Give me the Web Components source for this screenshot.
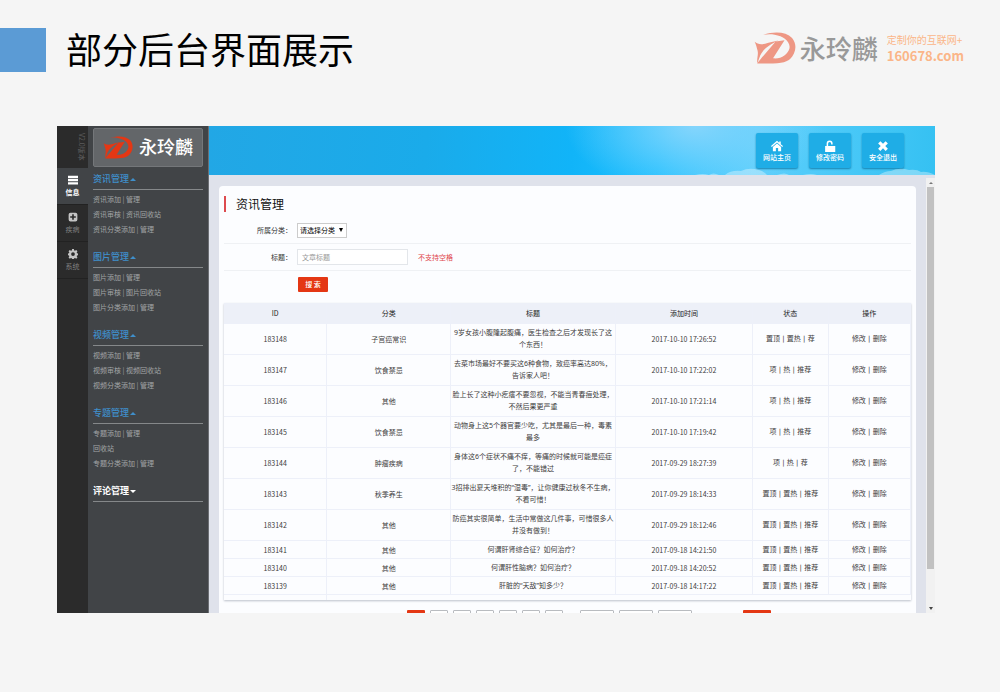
<!DOCTYPE html>
<html lang="zh-CN">
<head>
<meta charset="utf-8">
<title>部分后台界面展示</title>
<style>
html{background:#f5f5f5}
body{margin:0;font-family:"Noto Sans CJK SC","Noto Sans",sans-serif;color:#000}
</style>
</head>
<body>
<slide-page></slide-page>
<script>
const define = (name, html, setup) => {
  const tpl = document.createElement('template');
  tpl.innerHTML = html;
  customElements.define(name, class extends HTMLElement {
    constructor() {
      super();
      this.attachShadow({mode: 'open'}).append(tpl.content.cloneNode(true));
    }
    connectedCallback() {
      if (setup && !this.ready) { this.ready = true; setup(this, this.shadowRoot); }
    }
  });
};

const ICONS = {
  bars: '<path d="M0 1h16v4H0zM0 6.500h16v3.500H0zM0 11.500h16v3.500H0z"/>',
  plus: '<path fill-rule="evenodd" d="M4 1h8a3 3 0 0 1 3 3v8a3 3 0 0 1-3 3H4a3 3 0 0 1-3-3V4a3 3 0 0 1 3-3zM6.700 3.500v3.200H3.500v2.600h3.200v3.200h2.600V9.300h3.200V6.700H9.300V3.500z"/>',
  gear: '<path fill-rule="evenodd" d="M6.600 0h2.800l.5 2.200 1.300.6 2-1.300 1.900 1.900-1.200 2 .5 1.300 2.300.5v2.600l-2.300.5-.5 1.300 1.200 2-1.900 1.900-2-1.300-1.300.6-.5 2.200H6.600l-.5-2.200-1.300-.6-2 1.300-1.900-1.900 1.200-2-.5-1.300-2.300-.5V7.200l2.300-.5.5-1.300-1.200-2 1.900-1.900 2 1.300 1.300-.6zM8 5a3 3 0 1 0 0 6 3 3 0 0 0 0-6z"/>',
  home: '<path d="M8 1l3 2.700V2h2v3.500L16 8l-1 1.200L8 3.200 1 9.200 0 8zM8 4.500l5.500 4.700V15H9.500v-4.500h-3V15h-4V9.200z"/>',
  unlock: '<path d="M3.500 8V4.500a4 4 0 0 1 8 0V6H9.500V4.500a2 2 0 0 0-4 0V8H15v8H1.500V8z"/>',
  close: '<path d="M4.500 1.500L8 5l3.500-3.500 3 3L11 8l3.500 3.500-3 3L8 11l-3.500 3.500-3-3L5 8 1.500 4.500z"/>'
};

define('ui-icon', `<style>
:host{display:block;width:12px;height:12px}
svg{display:block;width:100%;height:100%;fill:currentColor}
</style><svg viewBox="0 0 16 16"></svg>`, (el, root) => {
  root.querySelector('svg').innerHTML = ICONS[el.getAttribute('name')];
});

define('brand-mark', `<style>
:host{display:block;width:42px}
svg{display:block;width:100%;fill:currentColor}
</style><svg viewBox="12 8 128 97">
<path d="M40 17C75 5 110 8 128 26C146 48 138 75 122 90C108 103 85 104 22 104C25 98 32 92 36 86L78 37L105 33L70 88C95 91 115 76 120 58C124 38 102 20 75 16C60 14 50 15 40 17Z"/>
<path d="M14 38C25 48 40 46 56 41L86 34C60 46 36 62 29 85L22 104C20 90 26 76 23 65C20 55 18 45 14 38Z"/></svg>`);

define('slide-header', `<style>
:host{display:flex;align-items:center;gap:20px;padding:20px 34px 0 0;height:60px}
i{width:46px;height:44px;background:#5b9bd5}
h1{margin:0;padding-bottom:4px;font-size:36px;line-height:48px;font-weight:400;white-space:nowrap}
.brand{display:flex;align-items:center;gap:4px;margin:0 2px 4px auto;color:#ee9784}
.name{font-size:26px;line-height:32px;font-weight:500;color:#999}
.tag{margin-left:5px;font-size:10px;line-height:16px;color:#fbb588}
.tag b{display:block;font-size:13px}
</style><i></i><h1>部分后台界面展示</h1>
<div class="brand"><brand-mark></brand-mark><span class="name">永玲麟</span><span class="tag">定制你的互联网+<b>160678.com</b></span></div>`);

define('rail-item', `<style>
:host{display:block;border-bottom:1px solid #222}
a{display:flex;flex-direction:column;align-items:center;justify-content:center;gap:2px;height:36px;color:#808080;text-decoration:none;font-size:7px;line-height:10px}
ui-icon{width:10px;height:10px;color:#c4c4c4}
:host([active]) a{background:#414447;color:#fff;font-weight:700}
:host([active]) ui-icon{color:#fff}
</style><a href="#"><ui-icon></ui-icon><slot></slot></a>`, (el, root) => {
  const old = root.querySelector('ui-icon');
  const icon = document.createElement('ui-icon');
  icon.setAttribute('name', el.getAttribute('icon'));
  old.replaceWith(icon);
});

define('nav-rail', `<style>
:host{display:block;width:31px;background:#2b2b2b}
.ver{display:flex;justify-content:flex-end;height:35px;padding:7px 1px 0 0;color:#5c5c5c;font-size:7px;line-height:10px}
.ver span{writing-mode:vertical-rl;text-orientation:sideways}
</style><div class="ver"><span>V2.0版本</span></div>
<rail-item icon="bars" active>信息</rail-item><rail-item icon="plus">疾病</rail-item><rail-item icon="gear">系统</rail-item>`);

define('nav-group', `<style>
:host{display:block;margin-bottom:10px}
h2{display:flex;align-items:center;gap:1px;margin:0;height:20px;border-bottom:1px solid #85888a;color:#3f8fcb;font-size:9px;line-height:20px;font-weight:500}
h2::after{content:"";border:3px solid transparent;border-top:0;border-bottom:3px solid currentColor}
:host([closed]) h2{color:#fff;font-weight:700}
:host([closed]) h2::after{border-top:3px solid currentColor;border-bottom:0}
div{padding-top:2px;color:#a2a4a6;font-size:7px;line-height:15px;white-space:nowrap}
p{margin:0}
a{color:inherit;text-decoration:none}
</style><h2></h2><div></div>`, (el, root) => {
  root.querySelector('h2').textContent = el.getAttribute('label');
  root.querySelector('div').innerHTML = (el.getAttribute('items') || '').split(';').map(line =>
    '<p>' + line.split('|').map(t => `<a href="#">${t}</a>`).join(' | ') + '</p>').join('');
});

define('side-menu', `<style>
:host{display:block;width:110px;padding:2px 5px 0;background:#414447;border-right:1px solid #6b6e73}
.logo{display:flex;align-items:center;justify-content:center;gap:6px;height:37px;margin-bottom:2px;border:1px solid #74777a;border-radius:2px;background:#636669;color:#e43714}
.logo brand-mark{width:30px}
.logo span{padding-bottom:3px;color:#fff;font-size:18px;line-height:24px;font-weight:500}
</style><div class="logo"><brand-mark></brand-mark><span>永玲麟</span></div>
<nav>
<nav-group label="资讯管理" items="资讯添加|管理;资讯审核|资讯回收站;资讯分类添加|管理"></nav-group>
<nav-group label="图片管理" items="图片添加|管理;图片审核|图片回收站;图片分类添加|管理"></nav-group>
<nav-group label="视频管理" items="视频添加|管理;视频审核|视频回收站;视频分类添加|管理"></nav-group>
<nav-group label="专题管理" items="专题添加|管理;回收站;专题分类添加|管理"></nav-group>
<nav-group label="评论管理" closed></nav-group>
</nav>`);

define('top-button', `<style>
:host{display:block}
button{display:flex;flex-direction:column;align-items:center;justify-content:center;gap:0;width:42px;height:35px;padding:0;border:0;border-radius:2px;background:#1fade6;box-shadow:0 1px 2px #1682b0;color:#fff;font:500 7px/10px "Noto Sans CJK SC",sans-serif}
</style><button type="button"><ui-icon></ui-icon><slot></slot></button>`, (el, root) => {
  const icon = document.createElement('ui-icon');
  icon.setAttribute('name', el.getAttribute('icon'));
  root.querySelector('ui-icon').replaceWith(icon);
});

define('top-bar', `<style>
:host{display:grid;height:49px;background:radial-gradient(ellipse 130px 70px at 67% 0,#84d5fc,#84d5fc00),linear-gradient(95deg,#22a7e5 0,#1aabea 30%,#11b4f8 50%,#1fc0ff 62%,#5ccffc 75%,#35c1f2 100%)}
svg,.bar{grid-area:1/1}
svg{align-self:end;justify-self:end;width:240px;height:10px;fill:#fff;opacity:.35}
.bar{display:flex;justify-content:flex-end;align-items:center;gap:11px;padding:0 31px 0 0}
</style>
<svg viewBox="0 0 240 10"><path d="M0 10q8-2 14 0q4-3 10 0zM30 10q6-5 16-4q8-4 18-1q6 2 8 5zM82 10q8-3 12 0zM108 10q8-2 14 0zM184 10q6-4 12-4q8-4 18-1q8-1 12 2q6-1 14 3z"/></svg>
<div class="bar"><top-button icon="home">网站主页</top-button><top-button icon="unlock">修改密码</top-button><top-button icon="close">安全退出</top-button></div>`);

define('search-form', `<style>
:host{display:block;color:#333;font-size:7px}
.row{display:grid;grid-template-columns:68px 1fr;column-gap:5px;align-items:center;height:26px;border-bottom:1px solid #eff1f4}
.row:last-child{border:0}
label{text-align:right;line-height:12px}
.field{display:flex;align-items:center;gap:10px}
select,input,button{box-sizing:border-box;font:7px/12px "Noto Sans CJK SC",sans-serif}
.pick{display:grid;width:50px}
.pick>*{grid-area:1/1}
select{appearance:none;height:15px;padding:0 2px;border:1px solid #ccc;border-radius:0;background:#fff;color:#000}
.pick i{place-self:center end;margin-right:4px;border:2px solid transparent;border-top:4px solid #000;border-bottom:0;pointer-events:none}
input{width:111px;height:16px;padding:0 4px;border:1px solid #e3e6ea;background:#fff}
input::placeholder{color:#999}
em{font-style:normal;color:#e0474c}
button{width:30px;height:15px;margin-left:1px;padding:0;border:0;border-radius:1px;background:#e43714;color:#fff;font-weight:500}
</style>
<form>
<div class="row"><label for="cat">所属分类：</label><div class="field"><span class="pick"><select id="cat"><option>请选择分类</option></select><i></i></span></div></div>
<div class="row"><label for="title">标题：</label><div class="field"><input id="title" type="text" placeholder="文章标题"><em>不支持空格</em></div></div>
<div class="row"><span></span><div class="field"><button type="button">搜 索</button></div></div>
</form>`);

const ROWS = [
  ['183148', '子宫癌常识', '9岁女孩小腹隆起腹痛，医生检查之后才发现长了这<br>个东西！', '2017-10-10 17:26:52', '置顶|置热|荐'],
  ['183147', '饮食禁忌', '去菜市场最好不要买这6种食物，致癌率高达80%，<br>告诉家人吧！', '2017-10-10 17:22:02', '项|热|推荐'],
  ['183146', '其他', '脸上长了这种小疙瘩不要忽视，不能当青春痘处理，<br>不然后果更严重', '2017-10-10 17:21:14', '项|热|推荐'],
  ['183145', '饮食禁忌', '动物身上这5个器官要少吃，尤其是最后一种，毒素<br>最多', '2017-10-10 17:19:42', '项|热|推荐'],
  ['183144', '肿瘤疾病', '身体这6个症状不痛不痒，等痛的时候就可能是癌症<br>了，不能错过', '2017-09-29 18:27:39', '项|热|荐'],
  ['183143', '秋季养生', '3招排出夏天堆积的“湿毒”，让你健康过秋冬不生病，<br>不看可惜！', '2017-09-29 18:14:33', '置顶|置热|推荐'],
  ['183142', '其他', '防癌其实很简单，生活中常做这几件事，可惜很多人<br>并没有做到！', '2017-09-29 18:12:46', '置顶|置热|推荐'],
  ['183141', '其他', '何谓肝肾综合征？如何治疗？', '2017-09-18 14:21:50', '置顶|置热|推荐'],
  ['183140', '其他', '何谓肝性脑病？如何治疗？', '2017-09-18 14:20:52', '置顶|置热|推荐'],
  ['183139', '其他', '肝脏的“天敌”知多少？', '2017-09-18 14:17:22', '置顶|置热|推荐']
];

define('article-table', `<style>
:host{display:block;box-shadow:0 1px 2px #bcc1ca}
table{width:100%;table-layout:fixed;border-collapse:collapse;font-size:7px;line-height:12px;text-align:center;color:#3c3c3c}
th,td{padding:0;border-right:1px solid #edf0f9;border-bottom:1px solid #edf0f9;white-space:nowrap}
th{height:20px;background:#edf0f8;font-weight:400;color:#222}
td{height:17px}
td.title{font-family:"Noto Sans","Noto Sans CJK SC",sans-serif}
td.links{font-family:"DejaVu Sans","Noto Sans CJK SC",sans-serif}
tr.tall td{height:30px}
tfoot td{height:5px;border-bottom:0}
tfoot td+td{border-right:0}
a{color:inherit;text-decoration:none}
</style><table>
<colgroup><col style="width:15%"><col style="width:18%"><col style="width:24%"><col style="width:20%"><col style="width:11%"><col style="width:12%"></colgroup>
<thead><tr><th>ID</th><th>分类</th><th>标题</th><th>添加时间</th><th>状态</th><th>操作</th></tr></thead>
<tbody></tbody><tfoot><tr><td></td><td colspan="5"></td></tr></tfoot></table>`, (el, root) => {
  const links = s => s.split('|').map(t => `<a href="#">${t}</a>`).join(' | ');
  root.querySelector('tbody').innerHTML = ROWS.map(([id, cat, title, time, state]) =>
    `<tr${title.includes('<br>') ? ' class="tall"' : ''}><td>${id}</td><td>${cat}</td><td class="title">${title}</td><td>${time}</td><td class="links">${links(state)}</td><td class="links">${links('修改|删除')}</td></tr>`).join('');
});

define('page-strip', `<style>
:host{display:flex;gap:5px;height:3px;padding-left:183px;overflow:hidden}
button{box-sizing:border-box;flex:none;width:18px;height:16px;padding:0;border:1px solid #b9bcc0;border-radius:1px;background:#fff}
.on{border:0;background:#e43714}
.wide{width:34px}
.gap{margin-left:12px}
.go{width:28px;margin-left:46px}
</style><button type="button" class="on"></button><button type="button"></button><button type="button"></button><button type="button"></button><button type="button"></button><button type="button"></button><button type="button"></button><button type="button" class="wide gap"></button><button type="button" class="wide"></button><button type="button" class="wide"></button><button type="button" class="on go"></button>`);

define('scroll-track', `<style>
:host{display:flex;flex-direction:column;align-items:center;width:9px;margin-top:3px;background:#f1f1f1}
.cap{display:grid;place-items:center;height:9px}
.cap::before{content:"";border:2px solid transparent;border-top:0;border-bottom:2px solid #777}
.cap.down::before{border-top:3px solid #444;border-bottom:0}
.run{display:flex;flex-direction:column;flex:1;width:7px}
.thumb{flex:11;background:#c1c1c1}
.rest{flex:1}
</style><div class="cap"></div><div class="run"><div class="thumb"></div><div class="rest"></div></div><div class="cap down"></div>`);

define('content-card', `<style>
:host{display:block;padding:10px 5px 0;border-radius:4px 4px 0 0;background:#fcfdff}
h2{margin:0 0 5px;padding-left:10px;border-left:2px solid #dd4b4f;font-size:12px;line-height:16px;font-weight:400;color:#111}
article-table{margin:6px 0 10px}
</style><h2>资讯管理</h2><search-form></search-form><article-table></article-table><page-strip></page-strip>`);

define('admin-app', `<style>
:host{display:flex;margin:46px 65px 0 57px}
main{display:flex;flex-direction:column;flex:1;min-width:0}
.body{display:flex;flex:1;background:#dfe2eb}
content-card{flex:1;min-width:0;margin:11px 10px 0}
</style><nav-rail></nav-rail><side-menu></side-menu><main><top-bar></top-bar><div class="body"><content-card></content-card><scroll-track></scroll-track></div></main>`);

define('slide-page', `<style>:host{display:block}</style><slide-header></slide-header><admin-app></admin-app>`);
</script>
</body>
</html>
